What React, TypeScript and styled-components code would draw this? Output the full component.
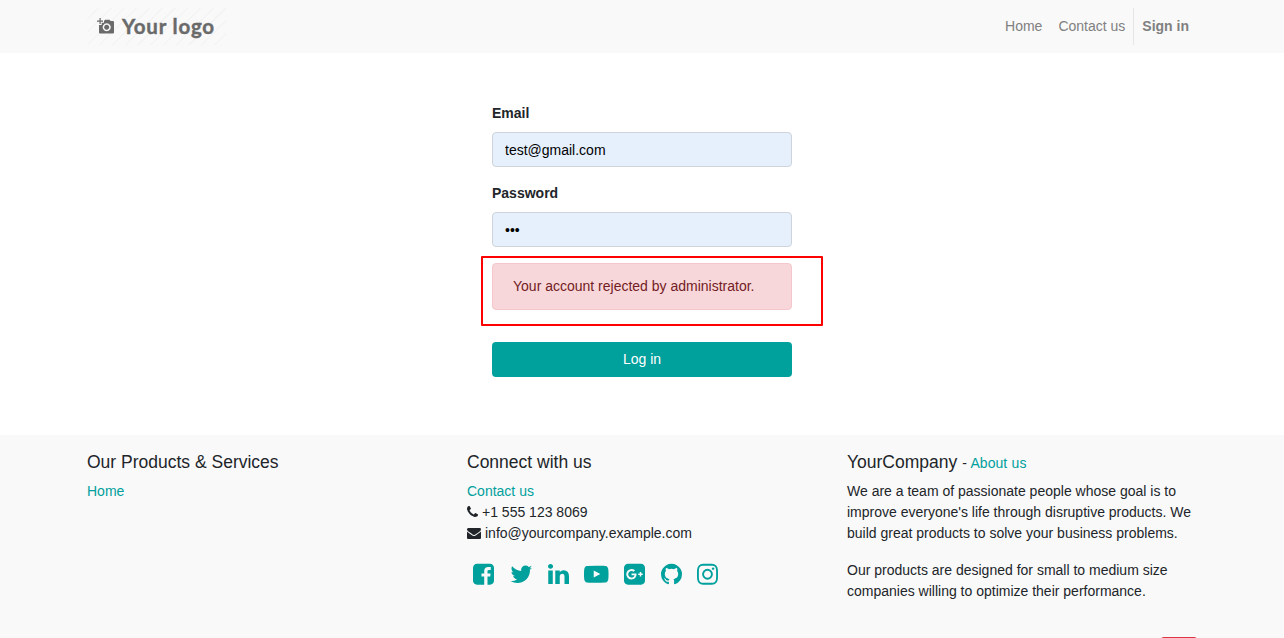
import React from 'react'
import styled, { createGlobalStyle } from 'styled-components'

const GlobalStyle = createGlobalStyle`
  *, *::before, *::after {
    box-sizing: border-box;
  }
  body {
    margin: 0;
    overflow: hidden;
    background: #fff;
    color: #212529;
    font: 14px/21px 'Liberation Sans', Arial, sans-serif;
  }
`

const Page = styled.div`
  position: relative;
  display: flex;
  flex-direction: column;
  height: 638px;
  overflow: hidden;
`

const Container = styled.div`
  display: flex;
  width: 1140px;
  margin: 0 auto;
  padding: 0 15px;
`

const Header = styled.header`
  height: 53px;
  padding-top: 8px;
  background: #f9f9f9;
`

const HeaderRow = styled(Container)`
  justify-content: space-between;
`

const Logo = styled.a`
  display: flex;
  align-items: center;
  width: 139px;
  height: 37px;
  padding-left: 10px;
  background: repeating-linear-gradient(135deg, #f9f9f9 0 7.5px, #f4f4f4 7.5px 9px);
`

const LogoIcon = styled.svg`
  width: 17px;
  height: 17px;
  margin: 0 8px 1px 0;
  fill: #6a6a6a;
`

const LogoText = styled.span`
  color: #6a6a6a;
  font: 700 20.5px/37px Lato, sans-serif;
  letter-spacing: 0.8px;
  -webkit-text-stroke: 0.4px #6a6a6a;
`

const Nav = styled.nav`
  display: flex;
  height: 37px;
`

const NavLink = styled.a<{ $bold?: boolean }>`
  padding: 8px;
  color: #808080;
  font-weight: ${(p) => (p.$bold ? 'bold' : 'normal')};
  border-left: ${(p) => (p.$bold ? '1px solid #e6e6e6' : '0')};
`

const Form = styled.form`
  display: flex;
  flex-direction: column;
  width: 300px;
  height: 382px;
  margin: 0 auto;
  padding-top: 50px;
`

const Label = styled.label`
  margin-bottom: 8px;
  font-weight: bold;
`

const Input = styled.input`
  height: 35px;
  margin-bottom: 16px;
  padding: 6px 12px;
  color: #000;
  font: inherit;
  background: #e6f0fd;
  border: 1px solid #ced4da;
  border-radius: 4px;
  outline: none;
`

const Highlight = styled.div`
  width: 342px;
  height: 70px;
  margin: -7px 0 16px -11px;
  padding: 5px 29px 0 9px;
  border: 2px solid #f00;
  border-radius: 1px;
`

const Alert = styled.p`
  height: 47px;
  margin: 0;
  padding: 12px 20px;
  color: #721c24;
  background: #f8d7da;
  border: 1px solid #f5c6cb;
  border-radius: 4px;
`

const Button = styled.button`
  height: 35px;
  padding: 0 12px;
  color: #fff;
  font: inherit;
  background: #00a09d;
  border: 0;
  border-radius: 4px;
`

const Footer = styled.footer`
  flex: 1;
  padding-top: 16px;
  background: #f9f9f9;
`

const Column = styled.section`
  width: 380px;
  padding-right: 30px;

  &:last-child {
    width: 350px;
    padding-right: 0;
  }
`

const Title = styled.h4`
  height: 22px;
  margin: 0 0 8px;
  font-size: 17.5px;
  font-weight: 400;
  line-height: 22px;
`

const Small = styled.span`
  font-size: 14px;
  line-height: 1;
  word-spacing: 0.6px;
`

const Link = styled.a`
  color: #00a09d;
`

const Line = styled.div`
  display: flex;
  align-items: center;
  height: 21px;
  white-space: pre;
`

const Paragraph = styled.p`
  margin: 0 0 16px;
`

const Socials = styled.div`
  display: flex;
  align-items: center;
  gap: 15.5px;
  margin-top: 18px;
  padding-left: 6px;
`

const Glyph = styled.svg<{ $w: number; $h: number }>`
  width: ${(p) => p.$w}px;
  height: ${(p) => p.$h}px;
  fill: #00a09d;
`

const LineGlyph = styled(Glyph)`
  margin: 0 4px 2px 0;
  fill: #212529;
`

// bottom page button, only its top edge is visible
const BottomButton = styled.button`
  position: absolute;
  top: 637px;
  left: 1161px;
  width: 36px;
  height: 30px;
  background: #dc3545;
  border: 0;
  border-radius: 3px;
`

const phone =
  'M1600 1240q0 27-10 70.5t-21 68.5q-21 50-122 106-94 51-186 51-27 0-53-3.5t-57.5-12.5-47-14.5-55.5-20.5-49-18q-98-35-175-83-127-79-264-216t-216-264q-48-77-83-175-3-9-18-49t-20.5-55.5-14.5-47-12.5-57.5-3.5-53q0-92 51-186 56-101 106-122 25-11 68.5-21t70.5-10q14 0 21 3 18 6 53 76 11 19 30 54t35 63.5 31 53.5q3 4 17.5 25t21.5 35.5 7 28.5q0 20-28.5 50t-62 55-62 53-28.5 46q0 9 5 22.5t8.5 20.5 14 24 11.5 19q76 137 174 235t235 174q2 1 19 11.5t24 14 20.5 8.5 22.5 5q18 0 46-28.5t53-62 55-62 50-28.5q14 0 28.5 7t35.5 21.5 25 17.5q25 15 53.5 31t63.5 35 54 30q70 35 76 53 3 7 3 21z'

const envelope =
  'M1792 710v794q0 66-47 113t-113 47h-1472q-66 0-113-47t-47-113v-794q44 49 101 87 362 246 497 345 57 42 92.5 65.5t94.5 48 110 24.5h2q51 0 110-24.5t94.5-48 92.5-65.5q170-123 498-345 57-39 100-87zm0-294q0 79-49 151t-122 123q-376 261-468 325-10 7-42.5 31t-54 38.5-52 32.5-57.5 27-50 9h-2q-23 0-50-9t-57.5-27-52-32.5-54-38.5-42.5-31q-91-64-262-182.5t-205-142.5q-62-42-117-115.5t-55-136.5q0-78 41.5-130t118.5-52h1472q65 0 112.5 47t47.5 113z'

interface Social {
  name: string
  x: number
  w: number
  d: string
}

// x and w crop the 1792 unit grid to the width of each icon
const socials: Social[] = [
  {
    name: 'Facebook',
    x: 128,
    w: 1536,
    d: 'M1376 128q119 0 203.5 84.5t84.5 203.5v960q0 119-84.5 203.5t-203.5 84.5h-188v-595h199l30-232h-229v-148q0-56 23.5-84t91.5-28l122-1v-207q-63-9-178-9-136 0-217.5 80t-81.5 226v171h-200v232h200v595h-532q-119 0-203.5-84.5t-84.5-203.5v-960q0-119 84.5-203.5t203.5-84.5h960z',
  },
  {
    name: 'Twitter',
    x: 64,
    w: 1664,
    d: 'M1684 408q-67 98-162 167 1 14 1 42 0 130-38 259.5t-115.5 248.5-184.5 210.5-258 146-323 54.5q-271 0-496-145 35 4 78 4 225 0 401-138-105-2-188-64.5t-114-159.5q33 5 61 5 43 0 85-11-112-23-185.5-111.5t-73.5-205.5v-4q68 38 146 41-66-44-105-115t-39-154q0-88 44-163 121 149 294.5 238.5t371.5 99.5q-8-38-8-74 0-134 94.5-228.5t228.5-94.5q140 0 236 102 109-21 205-78-37 115-142 178 93-10 186-50z',
  },
  {
    name: 'LinkedIn',
    x: 128,
    w: 1536,
    d: 'M477 625v991h-330v-991h330zm21-306q1 73-50.5 122t-135.5 49h-2q-82 0-132-49t-50-122q0-74 51.5-122.5t134.5-48.5 133 48.5 51 122.5zm1166 729v568h-329v-530q0-105-40.5-164.5t-126.5-59.5q-63 0-105.5 34.5t-63.5 85.5q-11 30-11 81v553h-329q2-399 2-647t-1-296l-1-48h329v144h-2q20-32 41-56t56.5-52 87-43.5 114.5-15.5q171 0 275 113.5t104 332.5z',
  },
  {
    name: 'YouTube',
    x: 0,
    w: 1792,
    d: 'M711 1128l484-250-484-253v503zm185-862q168 0 324.5 4.5t229.5 9.5l73 4q1 0 17 1.5t23 3 23.5 4.5 28.5 8 28 13 31 19.5 29 26.5q6 6 15.5 18.5t29 58.5 26.5 101q8 64 12.5 136.5t5.5 113.5v176q1 145-18 290-7 55-25 99.5t-32 61.5l-14 17q-14 15-29 26.5t-31 19-28 12.5-28.5 8-24 4.5-23 3-16.5 1.5q-251 19-627 19-207-2-359.5-6.5t-200.5-7.5l-49-4-36-4q-36-5-54.5-10t-51-21-56.5-41q-6-6-15.5-18.5t-29-58.5-26.5-101q-8-64-12.5-136.5t-5.5-113.5v-176q-1-145 18-290 7-55 25-99.5t32-61.5l14-17q14-15 29-26.5t31-19.5 28-13 28.5-8 23.5-4.5 23-3 17-1.5q251-18 627-18z',
  },
  {
    name: 'Google Plus',
    x: 128,
    w: 1536,
    d: 'M1045 905q0-26-6-64h-362v132h217q-3 24-16.5 50t-37.5 53-66.5 44.5-96.5 17.5q-99 0-169-71t-70-171 70-171 169-71q92 0 153 59l104-101q-108-100-257-100-160 0-272 112.5t-112 271.5 112 271.5 272 112.5q165 0 266.5-105t101.5-270zm345 46h109v-110h-109v-110h-110v110h-110v110h110v110h110v-110zm274-535v960q0 119-84.5 203.5t-203.5 84.5h-960q-119 0-203.5-84.5t-84.5-203.5v-960q0-119 84.5-203.5t203.5-84.5h960q119 0 203.5 84.5t84.5 203.5z',
  },
  {
    name: 'GitHub',
    x: 128,
    w: 1536,
    d: 'M896 128q209 0 385.5 103t279.5 279.5 103 385.5q0 251-146.5 451.5t-378.5 277.5q-27 5-40-7t-13-30q0-3 .5-76.5t.5-134.5q0-97-52-142 57-6 102.5-18t94-39 81-66.5 53-105 20.5-150.5q0-119-79-206 37-91-8-204-28-9-81 11t-92 44l-38 24q-93-26-192-26t-192 26q-16-11-42.5-27t-83.5-38.5-85-13.5q-45 113-8 204-79 87-79 206 0 85 20.5 150t52.5 105 80.5 67 94 39 102.5 18q-39 36-49 103-21 10-45 15t-57 5-65.5-21.5-55.5-62.5q-19-32-48.5-52t-49.5-24l-20-3q-21 0-29 4.5t-5 11.5 9 14 13 12l7 5q22 10 43.5 38t31.5 51l10 23q13 38 44 61.5t67 30 69.5 7 55.5-3.5l23-4q0 38 .5 88.5t.5 54.5q0 18-13 30t-40 7q-232-77-378.5-277.5t-146.5-451.5q0-209 103-385.5t279.5-279.5 385.5-103z',
  },
  {
    name: 'Instagram',
    x: 128,
    w: 1536,
    d: 'M1152 896q0-106-75-181t-181-75-181 75-75 181 75 181 181 75 181-75 75-181zm138 0q0 164-115 279t-279 115-279-115-115-279 115-279 279-115 279 115 115 279zm108-410q0 38-27 65t-65 27-65-27-27-65 27-65 65-27 65 27 27 65zm-502-220q-7 0-76.5-.5t-105.5 0-96.5 3-103 10-71.5 18.5q-50 20-88 58t-58 88q-11 29-18.5 71.5t-10 103-3 96.5 0 105.5.5 76.5-.5 76.5 0 105.5 3 96.5 10 103 18.5 71.5q20 50 58 88t88 58q29 11 71.5 18.5t103 10 96.5 3 105.5 0 76.5-.5 76.5.5 105.5 0 96.5-3 103-10 71.5-18.5q50-20 88-58t58-88q11-29 18.5-71.5t10-103 3-96.5 0-105.5-.5-76.5.5-76.5 0-105.5-3-96.5-10-103-18.5-71.5q-20-50-58-88t-88-58q-29-11-71.5-18.5t-103-10-96.5-3-105.5 0-76.5.5zm768 630q0 229-5 317-10 208-124 322t-322 124q-88 5-317 5t-317-5q-208-10-322-124t-124-322q-5-88-5-317t5-317q10-208 124-322t322-124q88-5 317-5t317 5q208 10 322 124t124 322q5 88 5 317z',
  },
]

const SocialIcon = ({ name, x, w, d }: Social) => (
  <Glyph $w={(w / 1792) * 24.5} $h={24.5} viewBox={`${x} 0 ${w} 1792`} aria-label={name}>
    <path d={d} />
  </Glyph>
)

const App = () => {
  return (
    <Page>
      <GlobalStyle />
      <Header>
        <HeaderRow>
          <Logo>
            <LogoIcon viewBox="0 0 17 17">
              <path d="M2.5 0h1.2v2.5H6v1.2H3.7V6H2.5V3.7H0V2.5h2.5z" />
              <path
                fillRule="evenodd"
                d="M7 3l1-1.2h4.5L13.7 3H16q1 0 1 1v10.500q0 1-1 1H3q-1 0-1-1V7h2.700V4.700H7zM9.700 5.200a4 4 0 1 0 .01 0zM9.700 6.700a2.500 2.500 0 1 1-.01 0z"
              />
            </LogoIcon>
            <LogoText>Your logo</LogoText>
          </Logo>
          <Nav>
            <NavLink>Home</NavLink>
            <NavLink>Contact us</NavLink>
            <NavLink $bold>Sign in</NavLink>
          </Nav>
        </HeaderRow>
      </Header>

      <Form>
        <Label htmlFor="login">Email</Label>
        <Input id="login" type="text" defaultValue="test@gmail.com" />
        <Label htmlFor="password">Password</Label>
        <Input id="password" type="password" defaultValue="123" />
        <Highlight>
          <Alert>Your account rejected by administrator.</Alert>
        </Highlight>
        <Button type="button">Log in</Button>
      </Form>

      <Footer>
        <Container>
          <Column>
            <Title>Our Products &amp; Services</Title>
            <Link>Home</Link>
          </Column>
          <Column>
            <Title>Connect with us</Title>
            <Line>
              <Link>Contact us</Link>
            </Line>
            <Line>
              <LineGlyph $w={11} $h={14} viewBox="192 0 1408 1792">
                <path d={phone} />
              </LineGlyph>
              +1 555 123 8069
            </Line>
            <Line>
              <LineGlyph $w={14} $h={14} viewBox="0 0 1792 1792">
                <path d={envelope} />
              </LineGlyph>
              info@yourcompany.example.com
            </Line>
            <Socials>
              {socials.map((s) => (
                <SocialIcon key={s.name} {...s} />
              ))}
            </Socials>
          </Column>
          <Column>
            <Title>
              YourCompany{' '}
              <Small>
                - <Link>About us</Link>
              </Small>
            </Title>
            <Paragraph>
              We are a team of passionate people whose goal is to improve everyone's life through
              disruptive products. We build great products to solve your business problems.
            </Paragraph>
            <Paragraph>
              Our products are designed for small to medium size companies willing to optimize their
              performance.
            </Paragraph>
          </Column>
        </Container>
      </Footer>
      <BottomButton aria-label="Bottom" />
    </Page>
  )
}

export default App
